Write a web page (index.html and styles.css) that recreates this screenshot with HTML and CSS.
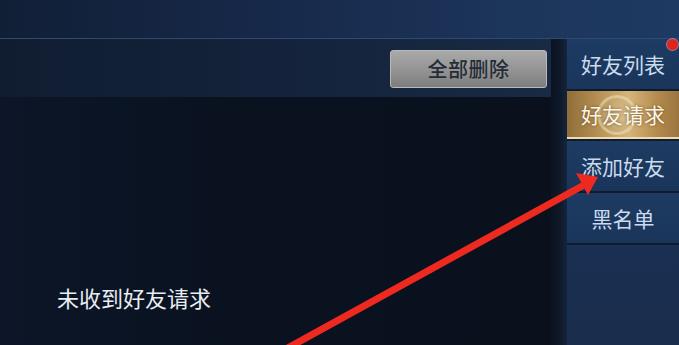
FILE: index.html
```html
<!DOCTYPE html>
<html lang="zh">
<head>
<meta charset="utf-8">
<link rel="stylesheet" href="styles.css">
</head>
<body>
<div class="screen">
  <div class="header"></div>
  <div class="main">
    <div class="left">
      <div class="toolbar">
        <button class="btn-clear">全部删除</button>
      </div>
      <div class="content">
        <p class="empty">未收到好友请求</p>
      </div>
    </div>
    <div class="divider"></div>
    <nav class="sidebar">
      <div class="tab tab-first">好友列表</div>
      <div class="tab tab-active"><span class="glow"></span><span class="tab-label">好友请求</span></div>
      <div class="tab">添加好友</div>
      <div class="tab">黑名单</div>
      <div class="sidebar-rest"></div>
    </nav>
  </div>
  <span class="dot"></span>
  <svg class="arrow" width="679" height="345" viewBox="0 0 679 345">
    <line x1="284" y1="350" x2="584" y2="185" stroke="#ee2a20" stroke-width="7" stroke-linecap="round"/>
    <polygon points="598,177 576,173 588,195" fill="#ee2a20"/>
  </svg>
</div>
</body>
</html>
```

FILE: styles.css
```css
* { box-sizing: border-box; }
html, body {
  margin: 0;
  padding: 0;
  width: 679px;
  height: 345px;
  overflow: hidden;
  background: #0b1320;
  font-family: "Noto Sans CJK SC", "Noto Sans", sans-serif;
}
.screen {
  position: relative;
  width: 679px;
  height: 345px;
  display: flex;
  flex-direction: column;
}
.header {
  height: 39px;
  flex: none;
  background: linear-gradient(90deg, #111f36 0%, #17294a 40%, #1c355a 75%, #1e3a62 100%);
  border-bottom: 1px solid #2e4a70;
}
.main {
  flex: 1;
  display: flex;
  min-height: 0;
}
.left {
  width: 551px;
  display: flex;
  flex-direction: column;
}
.toolbar {
  height: 58px;
  flex: none;
  display: flex;
  justify-content: flex-end;
  align-items: flex-start;
  padding: 11px 4px 0 0;
  background: linear-gradient(90deg, #101d31 0%, #14233b 50%, #182a44 100%);
}
.btn-clear {
  width: 157px;
  height: 38px;
  border: 1px solid #b9b9b9;
  border-radius: 3px;
  background: linear-gradient(180deg, #a9a9a9 0%, #959595 50%, #7d7d7d 100%);
  color: #242c36;
  font-family: "Noto Sans CJK SC", sans-serif;
  font-size: 20px;
  font-weight: 500;
  letter-spacing: 0.5px;
  padding: 0;
  line-height: 36px;
}
.content {
  flex: 1;
  background: linear-gradient(90deg, #0c1628 0%, #0a1220 40%, #0a111d 100%);
  padding: 185px 0 0 57px;
}
.empty {
  margin: 0;
  color: #e8edf2;
  font-size: 22px;
  line-height: 30px;
}
.divider {
  width: 16px;
  background: linear-gradient(90deg, #0b1321 0%, #0e1828 50%, #15253d 100%);
}
.sidebar {
  width: 112px;
  display: flex;
  flex-direction: column;
  gap: 2px;
  background: #0f1b2e;
}
.tab {
  height: 50px;
  flex: none;
  display: flex;
  align-items: center;
  justify-content: center;
  background: linear-gradient(180deg, #1d3b63 0%, #1a355a 100%);
  color: #cadbee;
  font-size: 21px;
  position: relative;
  overflow: hidden;
}
.tab-first { height: 50px; }
.tab-active {
  height: 48px;
  background: linear-gradient(90deg, #8f6d38 0%, #c09a5c 35%, #d6b47a 55%, #b58c4e 80%, #9a7440 100%);
  border-bottom: 2px solid #efdcae;
  color: #fbf6ea;
  text-shadow: 0 0 3px rgba(90, 60, 20, 0.8);
}
.glow {
  position: absolute;
  left: 30px;
  top: 4px;
  width: 40px;
  height: 40px;
  border-radius: 50%;
  border: 3px solid rgba(240, 235, 200, 0.45);
  background: radial-gradient(circle, rgba(230, 230, 200, 0.35) 0%, rgba(200, 200, 170, 0.15) 60%, rgba(0,0,0,0) 100%);
}
.tab-label { position: relative; }
.sidebar-rest {
  flex: 1;
  background: linear-gradient(180deg, #1a2f52 0%, #1a2d4c 100%);
}
.dot {
  position: absolute;
  left: 667px;
  top: 39px;
  width: 11px;
  height: 11px;
  border-radius: 50%;
  background: #e2231b;
  box-shadow: 0 0 0 1px rgba(255, 200, 200, 0.5);
}
.arrow {
  position: absolute;
  left: 0;
  top: 0;
  pointer-events: none;
}
```
